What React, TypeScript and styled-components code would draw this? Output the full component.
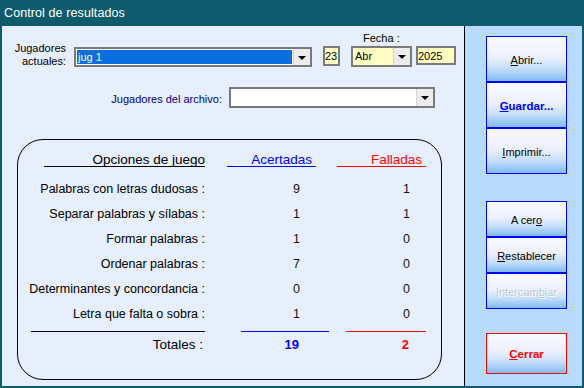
import React from "react";
import styled, { createGlobalStyle } from "styled-components";

const Global = createGlobalStyle`
  html, body { margin: 0; padding: 0; background: #0f5b6b; }
  body { font-family: "Liberation Sans", Arial, sans-serif; }
`;

const Window = styled.div`
  width: 584px;
  height: 388px;
  box-sizing: border-box;
  display: flex;
  flex-direction: column;
  background: #0f5b6b;
  padding: 0 2px 2px 2px;
  overflow: hidden;
`;

const TitleBar = styled.div`
  height: 26px;
  display: flex;
  align-items: center;
  padding-left: 2px;
  color: #ffffff;
  font-size: 12.5px;
  letter-spacing: 0.1px;
`;

const Body = styled.div`
  flex: 1;
  display: flex;
`;

const LeftPanel = styled.div`
  width: 462px;
  background: #e6effb;
  border-right: 1px solid #000;
  display: flex;
  flex-direction: column;
  padding-top: 5px;
  box-sizing: content-box;
`;

const RightPanel = styled.div`
  flex: 1;
  background: #b8dafb;
  display: flex;
  flex-direction: column;
  padding: 10px 0 0 21px;
`;

const TopRow = styled.div`
  display: flex;
  align-items: flex-end;
`;

const StackLabel = styled.div<{ $w: number }>`
  width: ${(p) => p.$w}px;
  text-align: right;
  font-size: 11px;
  line-height: 13px;
  color: #000;
  margin-bottom: -1px;
  align-self: flex-end;
  padding-bottom: 0;
`;

const Combo = styled.div<{ $w: number; $h: number; $ml: number; $bg?: string }>`
  width: ${(p) => p.$w}px;
  height: ${(p) => p.$h}px;
  margin-left: ${(p) => p.$ml}px;
  box-sizing: border-box;
  border: 2px solid #7a7a7a;
  background: ${(p) => p.$bg || "#fff"};
  display: flex;
  padding: 1px 0 1px 1px;
`;

const ComboValue = styled.div<{ $selected?: boolean }>`
  flex: 1;
  font-size: 11px;
  line-height: 14px;
  padding-left: 1px;
  color: ${(p) => (p.$selected ? "#fff" : "#000")};
  background: ${(p) => (p.$selected ? "#0a6ee0" : "transparent")};
  margin-right: 1px;
`;

const DropBtn = styled.div`
  width: 16px;
  margin-top: -1px;
  margin-bottom: -1px;
  background: #ececec;
  display: flex;
  align-items: center;
  justify-content: center;
  border-left: 1px solid #d4d4d4;
`;

const Arrow = styled.div`
  width: 0;
  height: 0;
  border-left: 4px solid transparent;
  border-right: 4px solid transparent;
  border-top: 4px solid #000;
  margin-top: 1px;
`;

const DateGroup = styled.div`
  display: flex;
  flex-direction: column;
  margin-left: 11px;
`;

const FechaLabel = styled.div`
  height: 14px;
  line-height: 14px;
  font-size: 11px;
  padding-left: 40px;
  margin-bottom: 1px;
  color: #000;
`;

const DateFields = styled.div`
  display: flex;
  align-items: flex-start;
`;

const Field = styled.div<{ $w: number; $h: number; $ml: number }>`
  width: ${(p) => p.$w}px;
  height: ${(p) => p.$h}px;
  margin-left: ${(p) => p.$ml}px;
  box-sizing: border-box;
  border: 2px solid #7a7a7a;
  background: #ffffc4;
  font-size: 11px;
  line-height: 14px;
  padding-top: 1px;
  color: #000;
`;

const SecondRow = styled.div`
  display: flex;
  align-items: center;
  margin-top: 20px;
`;

const NavyLabel = styled.div<{ $w: number }>`
  width: ${(p) => p.$w}px;
  text-align: right;
  font-size: 11px;
  color: #000080;
  padding-top: 2px;
`;

const ResultsBox = styled.div`
  margin: 31px 0 0 15px;
  width: 425px;
  height: 241px;
  box-sizing: border-box;
  border: 1px solid #000;
  border-radius: 26px;
`;

const Grid = styled.div`
  display: grid;
  grid-template-columns: 187px 111px 110px;
`;

const HeadCell = styled.div<{ $w: number; $color: string; $pr: number }>`
  justify-self: end;
  width: ${(p) => p.$w}px;
  height: 27px;
  box-sizing: border-box;
  border-bottom: 1px solid ${(p) => p.$color};
  color: ${(p) => p.$color};
  font-size: 13.5px;
  line-height: 13px;
  text-align: right;
  padding-right: ${(p) => p.$pr}px;
  display: flex;
  align-items: flex-end;
  justify-content: flex-end;
  margin-bottom: 10px;
`;

const RowLabel = styled.div`
  height: 25px;
  line-height: 25px;
  text-align: right;
  font-size: 12.5px;
  color: #000;
`;

const Num = styled.div`
  height: 25px;
  line-height: 25px;
  text-align: right;
  padding-right: 16px;
  font-size: 12.5px;
  color: #141414;
`;

const Rule = styled.div<{ $w: number; $color: string; $mr: number }>`
  justify-self: end;
  width: ${(p) => p.$w}px;
  height: 1px;
  background: ${(p) => p.$color};
  margin-top: 4px;
  margin-right: ${(p) => p.$mr}px;
`;

const TotalLabel = styled.div`
  height: 25px;
  line-height: 25px;
  text-align: right;
  padding-right: 2px;
  font-size: 13.5px;
  color: #000;
`;

const TotalNum = styled.div<{ $color: string }>`
  height: 25px;
  line-height: 25px;
  text-align: right;
  padding-right: 17px;
  font-size: 13px;
  font-weight: bold;
  color: ${(p) => p.$color};
`;

const ButtonGroup = styled.div<{ $mt: number }>`
  display: flex;
  flex-direction: column;
  margin-top: ${(p) => p.$mt}px;
`;

const Btn = styled.div<{
  $h: number;
  $border?: string;
  $color?: string;
  $bold?: boolean;
  $disabled?: boolean;
  $size?: number;
}>`
  width: 81px;
  height: ${(p) => p.$h}px;
  box-sizing: border-box;
  border: 1px solid ${(p) => p.$border || "#0000ff"};
  background: linear-gradient(to bottom, #f8f8ff 0%, #eef1fd 45%, #c4def9 72%, #7fbcf3 100%);
  display: flex;
  align-items: center;
  justify-content: center;
  font-size: ${(p) => p.$size || 11}px;
  font-weight: ${(p) => (p.$bold ? "bold" : "normal")};
  color: ${(p) => (p.$disabled ? "#c2cad4" : p.$color || "#000")};
  text-shadow: ${(p) => (p.$disabled ? "1px 1px 0 #ffffff" : "none")};
  padding-top: 1px;
  u { text-decoration: underline; text-underline-offset: 1px; }
`;

const rows: [string, number, number][] = [
  ["Palabras con letras dudosas :", 9, 1],
  ["Separar palabras y sílabas :", 1, 1],
  ["Formar palabras :", 1, 0],
  ["Ordenar palabras :", 7, 0],
  ["Determinantes y concordancia :", 0, 0],
  ["Letra que falta o sobra :", 1, 0],
];

export default function App() {
  const ac = rows.reduce((s, r) => s + r[1], 0);
  const fa = rows.reduce((s, r) => s + r[2], 0);
  return (
    <>
      <Global />
      <Window>
        <TitleBar>Control de resultados</TitleBar>
        <Body>
          <LeftPanel>
            <TopRow>
              <StackLabel $w={64}>
                Jugadores
                <br />
                actuales:
              </StackLabel>
              <Combo $w={238} $h={20} $ml={8}>
                <ComboValue $selected>jug 1</ComboValue>
                <DropBtn>
                  <Arrow />
                </DropBtn>
              </Combo>
              <DateGroup>
                <FechaLabel>Fecha :</FechaLabel>
                <DateFields>
                  <Field $w={17} $h={20} $ml={0}>23</Field>
                  <Combo $w={61} $h={21} $ml={11} $bg="#ffffc4">
                    <ComboValue>Abr</ComboValue>
                    <DropBtn>
                      <Arrow />
                    </DropBtn>
                  </Combo>
                  <Field $w={40} $h={19} $ml={4}>2025</Field>
                </DateFields>
              </DateGroup>
            </TopRow>
            <SecondRow>
              <NavyLabel $w={220}>Jugadores del archivo:</NavyLabel>
              <Combo $w={206} $h={21} $ml={7}>
                <ComboValue />
                <DropBtn>
                  <Arrow />
                </DropBtn>
              </Combo>
            </SecondRow>
            <ResultsBox>
              <Grid>
                <HeadCell $w={161} $color="#000" $pr={0}>Opciones de juego</HeadCell>
                <HeadCell $w={89} $color="#0000ff" $pr={4}>Acertadas</HeadCell>
                <HeadCell $w={89} $color="#ff0000" $pr={4}>Falladas</HeadCell>
                {rows.map(([label, a, f]) => (
                  <React.Fragment key={label}>
                    <RowLabel>{label}</RowLabel>
                    <Num>{a}</Num>
                    <Num>{f}</Num>
                  </React.Fragment>
                ))}
                <Rule $w={174} $color="#000" $mr={0} />
                <Rule $w={88} $color="#0000ff" $mr={-13} />
                <Rule $w={80} $color="#ff0000" $mr={0} />
                <TotalLabel>Totales :</TotalLabel>
                <TotalNum $color="#0000f0">{ac}</TotalNum>
                <TotalNum $color="#ff0000">{fa}</TotalNum>
              </Grid>
            </ResultsBox>
          </LeftPanel>
          <RightPanel>
            <ButtonGroup $mt={0}>
              <Btn $h={46}>
                <span>
                  <u>A</u>brir...
                </span>
              </Btn>
              <Btn $h={46} $color="#0000ff" $bold $size={11.5}>
                <span>
                  <u>G</u>uardar...
                </span>
              </Btn>
              <Btn $h={46}>
                <span>
                  <u>I</u>mprimir...
                </span>
              </Btn>
            </ButtonGroup>
            <ButtonGroup $mt={27}>
              <Btn $h={36}>
                <span>
                  A cer<u>o</u>
                </span>
              </Btn>
              <Btn $h={36}>
                <span>
                  <u>R</u>establecer
                </span>
              </Btn>
              <Btn $h={36} $disabled>
                <span>
                  Intercam<u>b</u>iar
                </span>
              </Btn>
            </ButtonGroup>
            <ButtonGroup $mt={24}>
              <Btn $h={41} $border="#ff0000" $color="#ff0000" $bold $size={11.5}>
                <span>
                  <u>C</u>errar
                </span>
              </Btn>
            </ButtonGroup>
          </RightPanel>
        </Body>
      </Window>
    </>
  );
}
